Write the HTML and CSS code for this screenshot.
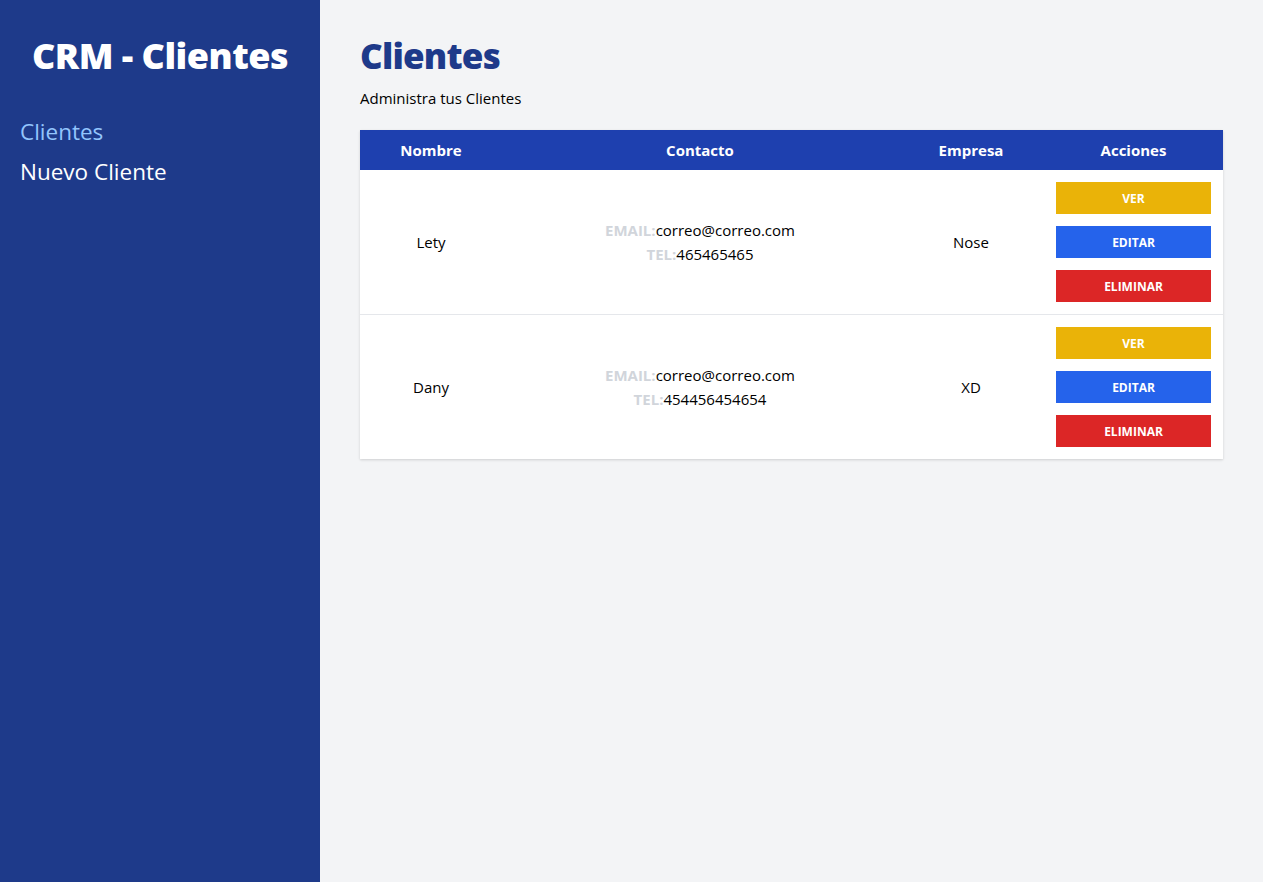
FILE: index.html
```html
<!DOCTYPE html>
<html lang="es">
<head>
<meta charset="utf-8">
<title>CRM - Clientes</title>
<link rel="stylesheet" href="styles.css">
</head>
<body>
<div class="layout">
  <aside class="sidebar">
    <h2 class="brand">CRM - Clientes</h2>
    <nav class="nav">
      <a class="nav-link active" href="#">Clientes</a>
      <a class="nav-link" href="#">Nuevo Cliente</a>
    </nav>
  </aside>
  <main class="main">
    <h1 class="title">Clientes</h1>
    <p class="subtitle">Administra tus Clientes</p>
    <table class="table">
      <colgroup>
        <col class="col-nombre">
        <col class="col-contacto">
        <col class="col-empresa">
        <col class="col-acciones">
      </colgroup>
      <thead>
        <tr>
          <th>Nombre</th>
          <th>Contacto</th>
          <th>Empresa</th>
          <th>Acciones</th>
        </tr>
      </thead>
      <tbody>
        <tr>
          <td>Lety</td>
          <td>
            <p class="line"><span class="label">Email:</span>correo@correo.com</p>
            <p class="line"><span class="label">Tel:</span>465465465</p>
          </td>
          <td>Nose</td>
          <td class="actions">
            <button class="btn btn-ver">Ver</button>
            <button class="btn btn-editar">Editar</button>
            <button class="btn btn-eliminar">Eliminar</button>
          </td>
        </tr>
        <tr>
          <td>Dany</td>
          <td>
            <p class="line"><span class="label">Email:</span>correo@correo.com</p>
            <p class="line"><span class="label">Tel:</span>454456454654</p>
          </td>
          <td>XD</td>
          <td class="actions">
            <button class="btn btn-ver">Ver</button>
            <button class="btn btn-editar">Editar</button>
            <button class="btn btn-eliminar">Eliminar</button>
          </td>
        </tr>
      </tbody>
    </table>
  </main>
</div>
</body>
</html>
```

FILE: styles.css
```css
* { box-sizing: border-box; }
html, body { margin: 0; padding: 0; }
body {
  font-family: "Open Sans", "Noto Sans", "Liberation Sans", sans-serif;
  font-size: 16px;
  line-height: 24px;
  color: #000;
}
.layout {
  display: flex;
  min-height: 882px;
}
.sidebar {
  width: 320px;
  flex-shrink: 0;
  background: #1e3a8a;
  padding: 36px 20px 40px;
}
.brand {
  margin: 0;
  font-size: 36px;
  line-height: 40px;
  font-weight: 900;
  color: #fff;
  text-align: center;
  letter-spacing: -0.5px;
}
.nav {
  margin-top: 40px;
  display: flex;
  flex-direction: column;
  gap: 8px;
}
.nav-link {
  display: block;
  font-size: 22.5px;
  line-height: 32px;
  color: #fff;
  text-decoration: none;
}
.nav-link.active { color: #93c5fd; }
.main {
  flex: 1;
  background: #f3f4f6;
  padding: 36px 40px 40px;
}
.title {
  margin: 0;
  font-size: 35px;
  line-height: 40px;
  font-weight: 900;
  color: #1e3a8a;
  letter-spacing: -0.8px;
}
.subtitle {
  margin: 10px 0 0;
  font-size: 15px;
}
.table {
  margin-top: 20px;
  width: 863px;
  border-collapse: collapse;
  table-layout: fixed;
  background: #fff;
  box-shadow: 0 1px 3px 0 rgba(0,0,0,0.1), 0 1px 2px 0 rgba(0,0,0,0.06);
}
.col-nombre { width: 142px; }
.col-contacto { width: 396px; }
.col-empresa { width: 146px; }
.col-acciones { width: 179px; }
thead tr { background: #1e40af; color: #fff; }
th {
  padding: 8px;
  height: 40px;
  font-weight: 700;
  font-size: 15px;
  text-align: center;
}
tbody tr { border-bottom: 1px solid #e5e7eb; }
tbody tr:last-child { border-bottom: none; }
td {
  padding: 12px;
  text-align: center;
  font-size: 15px;
  vertical-align: middle;
}
.line { margin: 0; }
.label {
  text-transform: uppercase;
  font-weight: 700;
  color: #d1d5db;
}
.actions {
  display: flex;
  flex-direction: column;
  gap: 12px;
}
.btn {
  display: block;
  width: 155px;
  height: 32px;
  border: none;
  font-family: inherit;
  font-size: 12px;
  font-weight: 700;
  text-transform: uppercase;
  color: #fff;
  cursor: pointer;
}
.btn-ver { background: #eab308; }
.btn-editar { background: #2563eb; }
.btn-eliminar { background: #dc2626; }
```
